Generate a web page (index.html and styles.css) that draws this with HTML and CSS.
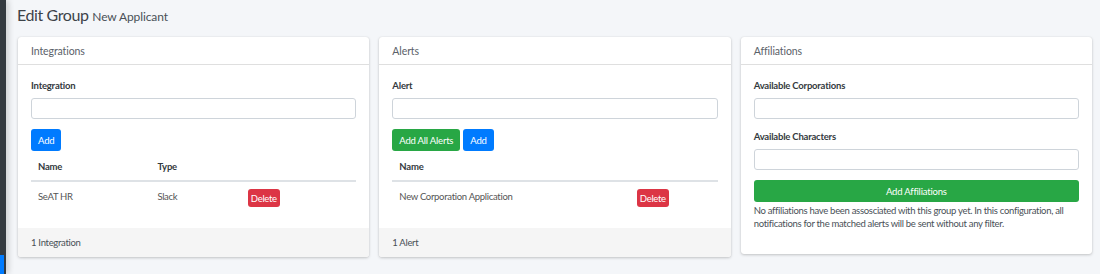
FILE: index.html
```html
<!DOCTYPE html>
<html lang="en">
<head>
    <meta charset="UTF-8">
    <meta name="viewport" content="width=device-width, initial-scale=1.0">
    <title>Edit Group</title>
    <link rel="stylesheet" href="styles.css">
</head>
<body>

    <!-- Sidebar edge -->
    <div class="sidebar">
        <div class="sidebar-active"></div>
    </div>

    <div class="content">
        <h1 class="page-title">Edit Group <small>New Applicant</small></h1>

        <div class="row">
            <!-- Integrations -->
            <div class="card">
                <div class="card-header">Integrations</div>
                <div class="card-body">
                    <div class="form-group">
                        <label>Integration</label>
                        <input type="text" class="form-control">
                    </div>
                    <div class="btn-row">
                        <button class="btn btn-primary">Add</button>
                    </div>
                    <table class="table table-integrations">
                        <thead>
                            <tr><th>Name</th><th>Type</th><th></th></tr>
                        </thead>
                        <tbody>
                            <tr>
                                <td>SeAT HR</td>
                                <td>Slack</td>
                                <td><button class="btn btn-danger btn-xs">Delete</button></td>
                            </tr>
                        </tbody>
                    </table>
                </div>
                <div class="card-footer">1 Integration</div>
            </div>

            <!-- Alerts -->
            <div class="card">
                <div class="card-header">Alerts</div>
                <div class="card-body">
                    <div class="form-group">
                        <label>Alert</label>
                        <input type="text" class="form-control">
                    </div>
                    <div class="btn-row">
                        <button class="btn btn-success">Add All Alerts</button>
                        <button class="btn btn-primary">Add</button>
                    </div>
                    <table class="table table-alerts">
                        <thead>
                            <tr><th>Name</th><th></th></tr>
                        </thead>
                        <tbody>
                            <tr>
                                <td>New Corporation Application</td>
                                <td><button class="btn btn-danger btn-xs">Delete</button></td>
                            </tr>
                        </tbody>
                    </table>
                </div>
                <div class="card-footer">1 Alert</div>
            </div>

            <!-- Affiliations -->
            <div class="card">
                <div class="card-header">Affiliations</div>
                <div class="card-body card-body-affiliations">
                    <div class="form-group">
                        <label>Available Corporations</label>
                        <input type="text" class="form-control">
                    </div>
                    <div class="form-group">
                        <label>Available Characters</label>
                        <input type="text" class="form-control">
                    </div>
                    <button class="btn btn-success btn-block">Add Affiliations</button>
                    <p class="help-text">No affiliations have been assosciated with this group yet. In this configuration, all notifications for the matched alerts will be sent without any filter.</p>
                </div>
            </div>
        </div>
    </div>

</body>
</html>
```

FILE: styles.css
```css
body {
    font-family: Lato, 'Liberation Sans', sans-serif;
    margin: 0;
    padding: 0;
    background-color: #f4f6f9;
    color: #212529;
    display: flex;
    min-height: 274px;
}
.sidebar {
    width: 6px;
    background-color: #343a40;
    box-shadow: 2px 0 6px rgba(0, 0, 0, 0.2);
    display: flex;
    flex-direction: column;
    flex-shrink: 0;
}
.sidebar-active {
    margin-top: auto;
    width: 4px;
    height: 19px;
    background-color: #007bff;
}
.content {
    flex: 1;
    padding: 0 8px 0 12px;
}
.page-title {
    margin: 4px 0 0 -1px;
    height: 33px;
    font-size: 16px;
    font-weight: 400;
    letter-spacing: -0.4px;
    line-height: 22px;
    color: #3d4349;
}
.page-title small {
    font-size: 12px;
    letter-spacing: -0.1px;
    color: #495057;
}
.row {
    display: grid;
    grid-template-columns: repeat(3, 1fr);
    gap: 10px;
    align-items: start;
}
.card {
    background: #fff;
    border-radius: 3px;
    box-shadow: 0 0 1px rgba(0, 0, 0, 0.125), 0 1px 3px rgba(0, 0, 0, 0.2);
    overflow: hidden;
}
.card-header {
    height: 25px;
    line-height: 25px;
    padding: 2px 13px 0;
    border-bottom: 1px solid rgba(0, 0, 0, 0.125);
    font-size: 10.5px;
    letter-spacing: -0.1px;
    color: #5a6169;
}
.card-body {
    padding: 13px 13px 14px;
}
.card-body-affiliations {
    padding-bottom: 24px;
}
.form-group {
    margin-bottom: 10px;
}
.form-group label {
    display: block;
    font-size: 9.5px;
    font-weight: 700;
    letter-spacing: -0.2px;
    line-height: 14px;
    padding-top: 1px;
    margin-bottom: 5px;
    color: #343a40;
}
.form-control {
    display: block;
    box-sizing: border-box;
    width: 100%;
    height: 21px;
    border: 1px solid #ced4da;
    border-radius: 3px;
    background: #fff;
    margin: 0;
}
.btn-row {
    display: flex;
    gap: 3px;
    margin-top: 1px;
}
.btn {
    font-family: inherit;
    font-size: 9.5px;
    letter-spacing: -0.2px;
    height: 22px;
    padding: 0 7px;
    border: none;
    border-radius: 3px;
    color: #fff;
    cursor: pointer;
}
.btn-primary {
    background-color: #007bff;
}
.btn-success {
    background-color: #28a745;
}
.btn-danger {
    background-color: #dc3545;
}
.btn-xs {
    display: block;
    height: 18px;
    padding: 0 3px;
    margin-top: -1px;
    letter-spacing: -0.3px;
}
.btn-block {
    display: block;
    width: 100%;
    margin-top: 2px;
}
.table {
    width: 100%;
    border-collapse: collapse;
    margin-bottom: 0;
    font-size: 9.5px;
    letter-spacing: -0.3px;
}
.table th {
    text-align: left;
    font-weight: 700;
    letter-spacing: -0.2px;
    color: #343a40;
    padding: 10px 7px 7px;
    line-height: 12px;
    border-bottom: 2px solid #dee2e6;
}
.table td {
    vertical-align: top;
    color: #555;
    padding: 8px 7px 7px;
    line-height: 14px;
}
.table-integrations th:first-child {
    width: 36.7%;
}
.table-integrations th:nth-child(2) {
    width: 27.8%;
}
.table-alerts th:first-child {
    width: 73%;
}
.card-footer {
    height: 28px;
    line-height: 28px;
    padding: 1px 13px 0;
    background-color: #f5f5f5;
    font-size: 9.5px;
    letter-spacing: -0.3px;
    color: #495057;
}
.help-text {
    margin: 2px 0 0;
    font-size: 9.5px;
    letter-spacing: -0.3px;
    line-height: 13px;
    color: #495057;
}
```
